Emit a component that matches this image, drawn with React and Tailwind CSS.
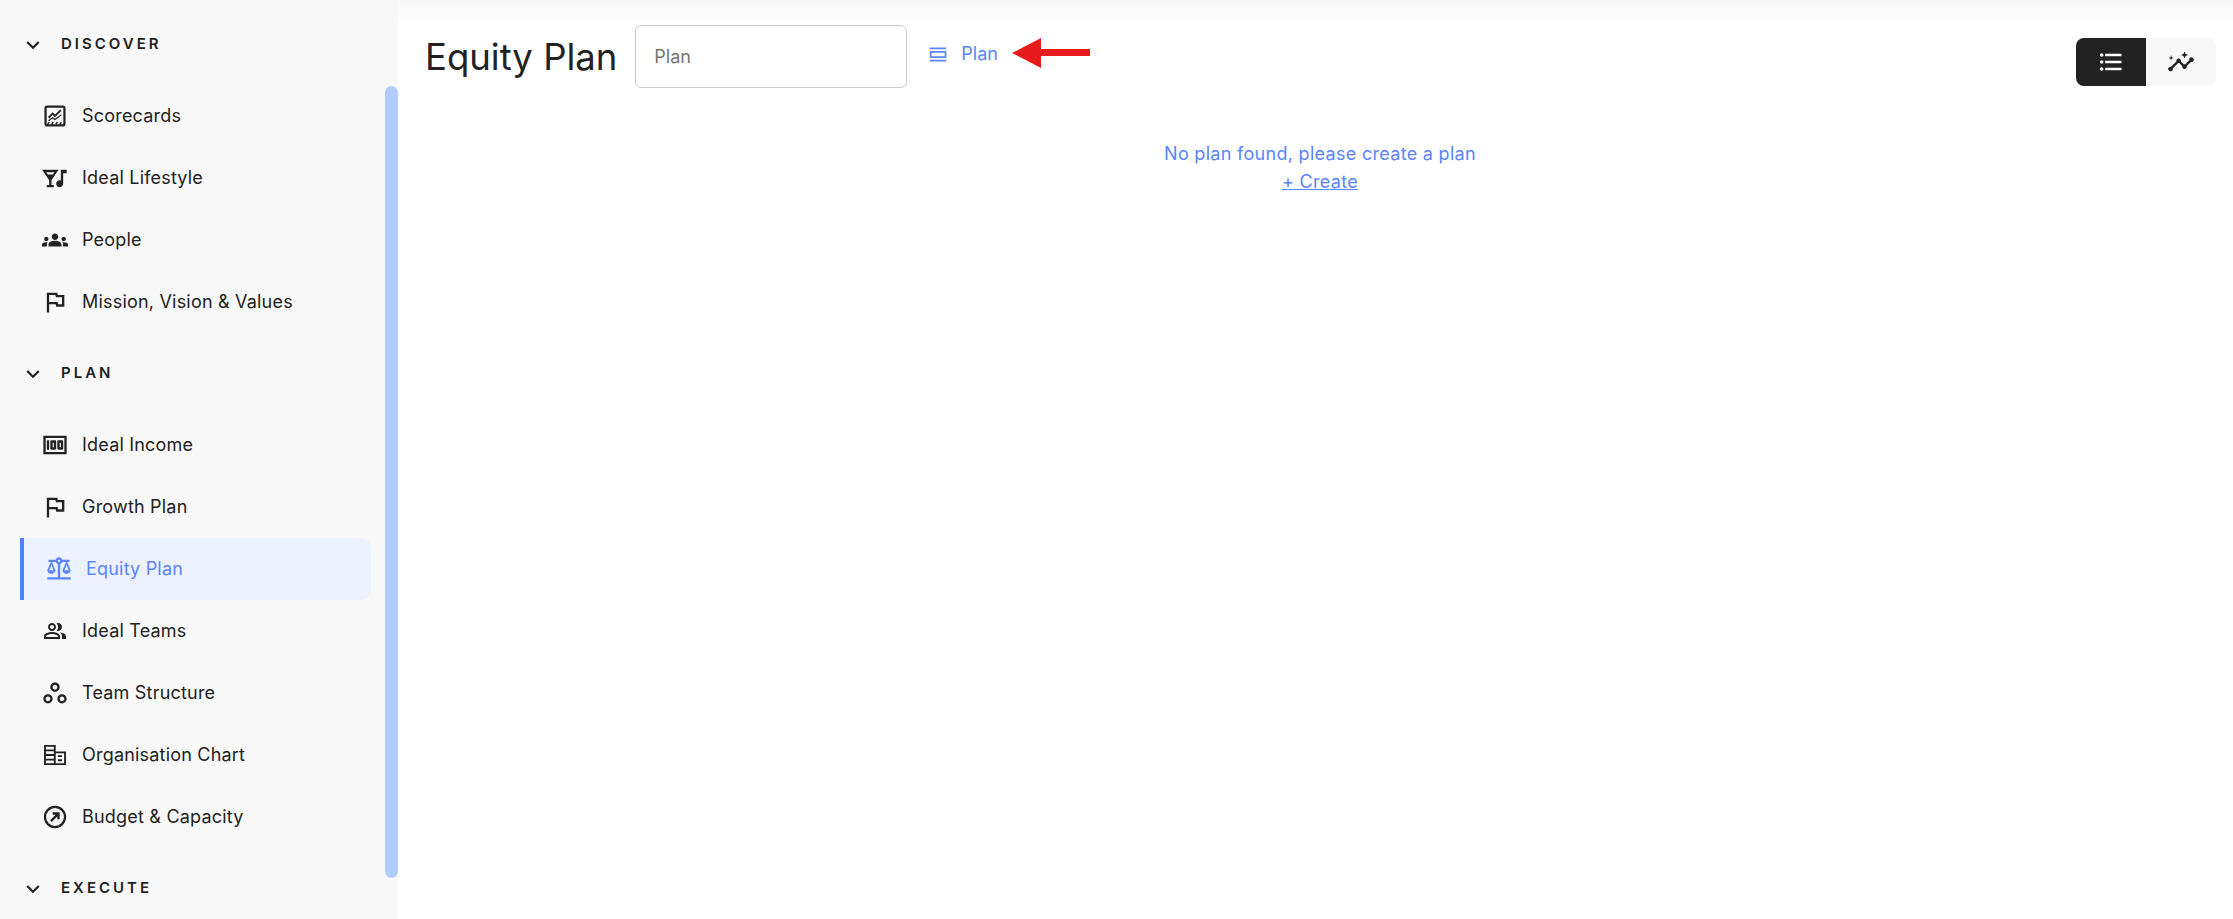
import React from "react";
import {
  MdKeyboardArrowDown,
  MdNightlife,
  MdGroups,
  MdOutlineFlag,
  MdOutlineMoney,
  MdOutlineBalance,
  MdOutlinePeopleAlt,
  MdOutlineWorkspaces,
  MdOutlineViewDay,
  MdFormatListBulleted,
  MdInsights,
} from "react-icons/md";

function ScorecardIcon({ className }) {
  return (
    <svg viewBox="0 0 24 24" className={className} fill="none" stroke="currentColor">
      <rect x="3.9" y="3.9" width="16.2" height="16.2" rx="1.5" strokeWidth="1.9" />
      <path d="M6.5 13.5l3.5-3.5 2 2 5-5" strokeWidth="1.6" />
      <path d="M6.5 16l3.5-2.5 2 1.5 5.5-4" strokeWidth="1.1" />
      <path d="M5.5 19.5l1.5-2.2M9 19.5l1.5-2.2M12.5 19.5l1.5-2.2M16 19.5l1.5-2.2" strokeWidth="1.2" />
    </svg>
  );
}

function OrgIcon({ className }) {
  return (
    <svg viewBox="0 0 24 24" className={className} fill="none" stroke="currentColor" strokeWidth="1.6">
      <path d="M3.4 4.2h8.4v15.6H3.4zM11.8 9.8h8.8v10h-8.8z" />
      <path d="M3.4 8h8.4M3.4 12h8.4M3.4 16h8.4M14.5 13h3.5M14.5 16.5h3.5" />
    </svg>
  );
}

function BudgetIcon({ className }) {
  return (
    <svg viewBox="0 0 24 24" className={className} fill="none" stroke="currentColor">
      <circle cx="12" cy="12" r="8.6" strokeWidth="1.9" />
      <path d="M8.5 15.5l6-6M10 9h5v5" strokeWidth="2" />
    </svg>
  );
}

function PeopleIcon() {
  return <MdGroups className="mx-px h-[26px] w-[26px] shrink-0" />;
}

function TeamsIcon() {
  return <MdOutlinePeopleAlt className="mx-0.5 h-6 w-6 shrink-0" />;
}

function Section({ title }) {
  return (
    <div className="flex h-[81px] items-center pl-5 text-[#222222]">
      <MdKeyboardArrowDown className="h-[26px] w-[26px] shrink-0" />
      <span className="ml-[15px] text-[15px] font-semibold tracking-[3px]">{title}</span>
    </div>
  );
}

function NavItem({ icon: Icon, label, active }) {
  return (
    <div
      className={
        active
          ? "ml-5 flex h-[62px] w-[351px] items-center rounded-r-[10px] border-l-4 border-[#4f80ff] bg-[#ecf2ff] pl-[21px] text-[#5b84ff]"
          : "ml-5 flex h-[62px] w-[351px] items-center pl-[21px] text-[#222222]"
      }
    >
      <Icon className="h-7 w-7 shrink-0" />
      <span className="ml-[13px] text-[18px] leading-none tracking-[0.2px]">{label}</span>
    </div>
  );
}

export default function App() {
  return (
    <div className="flex h-screen w-full overflow-hidden bg-white font-['Inter',sans-serif]">
      <aside className="relative h-full w-[398px] shrink-0 overflow-hidden bg-[#f8f8f8] pt-1">
        <Section title="DISCOVER" />
        <NavItem icon={ScorecardIcon} label="Scorecards" />
        <NavItem icon={MdNightlife} label="Ideal Lifestyle" />
        <NavItem icon={PeopleIcon} label="People" />
        <NavItem icon={MdOutlineFlag} label="Mission, Vision & Values" />
        <Section title="PLAN" />
        <NavItem icon={MdOutlineMoney} label="Ideal Income" />
        <NavItem icon={MdOutlineFlag} label="Growth Plan" />
        <NavItem icon={MdOutlineBalance} label="Equity Plan" active />
        <NavItem icon={TeamsIcon} label="Ideal Teams" />
        <NavItem icon={MdOutlineWorkspaces} label="Team Structure" />
        <NavItem icon={OrgIcon} label="Organisation Chart" />
        <NavItem icon={BudgetIcon} label="Budget & Capacity" />
        <Section title="EXECUTE" />
        <div className="absolute right-0 top-[86px] h-[792px] w-[13px] rounded-[7px] bg-[#b2ccff]" />
      </aside>

      <main className="min-w-0 flex-1">
        <div className="h-6 bg-gradient-to-b from-[#f8f8f8] to-white" />
        <div className="flex items-start pl-[27px] pr-[17px] pt-px">
          <h1 className="mt-[8px] text-[36.5px] font-normal leading-[48px] text-[#222222]">Equity Plan</h1>
          <input
            placeholder="Plan"
            className="ml-[18px] h-[63px] w-[272px] rounded-md border border-[#cccccc] px-[18px] text-[18px] placeholder:text-[#757575] outline-none"
          />
          <button className="ml-[21px] mt-[15px] flex items-center text-[18px] leading-[28px] text-[#5b84ff]">
            <MdOutlineViewDay className="h-[21px] w-[21px]" />
            <span className="ml-3">Plan</span>
          </button>
          <svg viewBox="0 0 78 30" className="ml-[14px] mt-[13px] h-[30px] w-[78px]">
            <path d="M0 15L29 0v11h49v7H29v12z" fill="#e61c1c" />
          </svg>
          <div className="ml-auto mt-[13px] flex h-12 w-[140px] overflow-hidden rounded-lg">
            <div className="flex flex-1 items-center justify-center bg-[#222222] text-white">
              <MdFormatListBulleted className="h-7 w-7" />
            </div>
            <div className="flex flex-1 items-center justify-center bg-[#f8f8f8] text-[#222222]">
              <MdInsights className="h-7 w-7" />
            </div>
          </div>
        </div>
        <div className="mt-[52px] pl-[9px] text-center text-[18px] leading-[28px] tracking-[0.3px] text-[#5b84ff]">
          <p>No plan found, please create a plan</p>
          <a className="underline">+ Create</a>
        </div>
      </main>
    </div>
  );
}
